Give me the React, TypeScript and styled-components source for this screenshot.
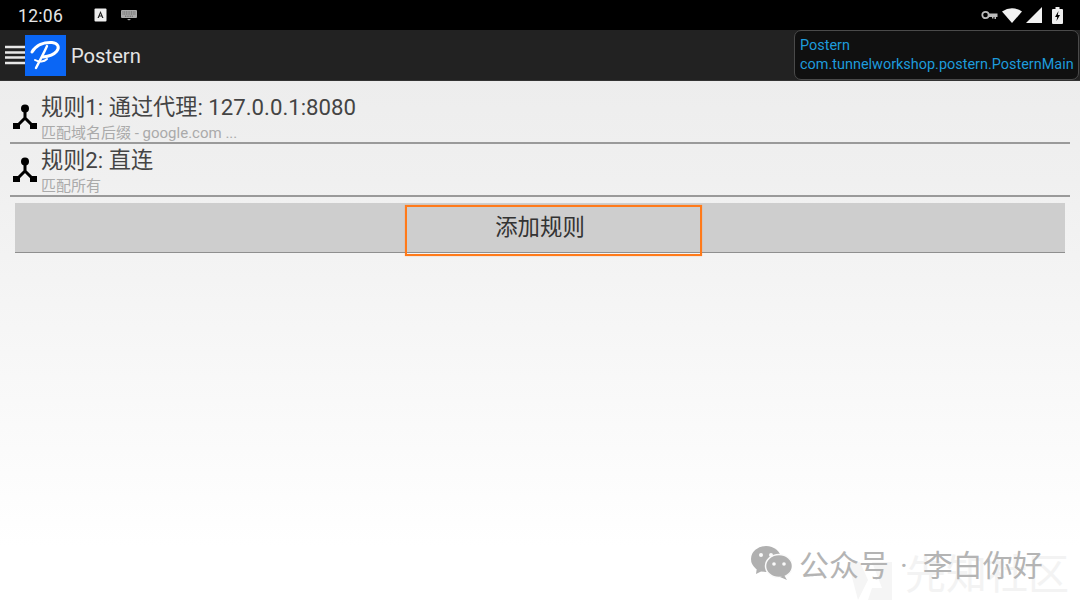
import React from 'react';
import styled, { createGlobalStyle } from 'styled-components';

const Global = createGlobalStyle`
  html, body { margin: 0; padding: 0; }
  body { font-family: Roboto, "Noto Sans CJK SC", sans-serif; overflow: hidden; }
  * { box-sizing: border-box; }
`;
const CJK = `Roboto, "Noto Sans CJK SC", sans-serif`;

const Screen = styled.div`
  position: relative; width: 1080px; height: 607px; overflow: hidden;
  display: flex; flex-direction: column;
  background: linear-gradient(#ebebeb 0%, #f0f0f0 30%, #ffffff 90%);
`;
const StatusBar = styled.div`
  height: 30px; background: #000; display: flex; align-items: center;
  padding: 0 17px 0 18px; color: #eee; flex: none;
`;
const Clock = styled.span`font-size: 17.5px; letter-spacing: 0.3px; width: 62px; color: #e6e6e6; margin-top: 2px;`;
const StatusLeft = styled.div`display: flex; align-items: center; gap: 14px; flex: 1;`;
const StatusRight = styled.div`display: flex; align-items: center; gap: 4px;`;

const AppBar = styled.div`
  height: 51px; flex: none; background: #222; border-bottom: 1px solid #333;
  display: flex; align-items: center; padding-left: 5px;
`;
const Logo = styled.div`
  width: 41px; height: 41px; background: #0a66f5; display: flex; align-items: center; justify-content: center; flex: none;
`;
const Title = styled.div`font-size: 20.2px; color: #e4e4e4; margin: 2px 0 0 5px; flex: 1;`;
const Toast = styled.div`
  width: 285px; height: 50px; margin-right: 1px; border: 1px solid #4a4a4a; border-radius: 7px; background: #101010;
  color: #1e9bdc; font-size: 14.45px; line-height: 19px; padding: 5px 0 0 5px; white-space: nowrap;
`;
const List = styled.div`display: flex; flex-direction: column; padding: 10px 10px 0;`;
const Row = styled.div`
  height: 53px; border-bottom: 2px solid #9a9a9a; display: flex; align-items: flex-start; gap: 3px; padding-left: 2px;
`;
const RowIcon = styled.svg`width: 26px; height: 28px; margin-top: 12px; flex: none;`;
const RowText = styled.div`display: flex; flex-direction: column; font-family: ${CJK};`;
const RowTitle = styled.div`font-size: 22.2px; line-height: 30px; color: #444; white-space: nowrap; margin-top: 1px;`;
const RowSub = styled.div`font-size: 15px; line-height: 17px; color: #aaa; white-space: nowrap; margin-top: 3px;`;

const AddWrap = styled.div`padding: 6px 15px 0;`;
const AddButton = styled.div`
  position: relative; height: 50px; background: #cecece; border-bottom: 1px solid #8f8f8f;
  display: flex; align-items: center; justify-content: center; font-size: 22.4px; color: #333; font-family: ${CJK};
  padding-bottom: 5px;
`;
const Focus = styled.div`
  position: absolute; left: 390px; top: 2px; width: 297px; height: 51px; border: 2px solid #ff7a1a;
  box-shadow: 0 0 1px rgba(255, 122, 26, 0.6);
`;
const Watermark = styled.div`
  position: absolute; left: 751px; top: 541px; display: flex; align-items: center; gap: 7px;
  color: #b4b4b4; font-size: 30px; font-family: ${CJK}; white-space: nowrap;
`;
const Sep = styled.span`margin: 0 15px 0 11px;`;
const Faint = styled.div`
  position: absolute; left: 905px; top: 550px; font-size: 41px; color: #f3f3f3; font-family: ${CJK}; white-space: nowrap; line-height: 50px;
`;
const FaintMark = styled.svg`
  position: absolute; left: 848px; top: 558px; width: 44px; height: 42px;
`;

const RuleIcon = () => (
  <RowIcon viewBox="0 0 26 28">
    <circle cx="13" cy="5.500" r="4" fill="#000" />
    <path d="M13 8v8M13 15L6 22M13 15l7 7" stroke="#000" strokeWidth="3" fill="none" />
    <rect x="1" y="20" width="7" height="6" fill="#000" />
    <rect x="18" y="20" width="7" height="6" fill="#000" />
  </RowIcon>
);

export default function App() {
  return (
    <Screen>
      <Global />
      <StatusBar>
        <StatusLeft>
          <Clock>12:06</Clock>
          <svg width="13" height="14" viewBox="0 0 13 14">
            <rect x="0.5" y="0.5" width="12" height="13" rx="1" fill="#eee" />
            <path d="M6.5 3L3.5 10h1.4l.5-1.4h2.2l.5 1.4h1.4L6.5 3zM5.8 7.4l.7-2 .7 2z" fill="#222" />
          </svg>
          <svg width="16" height="12" viewBox="0 0 16 12">
            <rect x="0" y="1" width="16" height="8" rx="1" fill="#aaa" />
            <path d="M1.5 3h13M1.5 5h13M4 7.2h8" stroke="#444" strokeWidth="0.7" strokeDasharray="1 .7" />
            <path d="M6 10h4l-2 1.5z" fill="#aaa" />
          </svg>
        </StatusLeft>
        <StatusRight>
          <svg width="17" height="10" viewBox="0 0 17 10">
            <circle cx="4.5" cy="5" r="3.2" fill="none" stroke="#bbb" strokeWidth="1.800" />
            <path d="M7.500 3.500h9v3.500h-1.500v2h-1.500V7h-1v1.500h-1.500V7h-3.500z" fill="#bbb" />
          </svg>
          <svg width="20" height="15" viewBox="0 0 20 15"><path d="M0 3.500Q10 -3 20 3.500L10 15z" fill="#f2f2f2" /></svg>
          <svg width="16" height="16" viewBox="0 0 16 16"><path d="M16 0v16H0z" fill="#f2f2f2" /></svg>
          <svg width="11" height="17" viewBox="0 0 11 17" style={{ marginLeft: 6 }}>
            <path d="M3.500 0h4v2H10a1 1 0 0 1 1 1v13a1 1 0 0 1-1 1H1a1 1 0 0 1-1-1V3a1 1 0 0 1 1-1h2.500z" fill="#eee" />
            <path d="M6.500 4L3 10h2.200l-.7 4L8 8H5.800z" fill="#000" />
          </svg>
        </StatusRight>
      </StatusBar>
      <AppBar>
        <svg width="20" height="20" viewBox="0 0 20 20">
          <path d="M0 2h20M0 7.500h20M0 12.500h20M0 18h20" stroke="#e8e8e8" strokeWidth="2.500" />
        </svg>
        <Logo>
          <svg width="34" height="32" viewBox="0 0 34 32">
            <path d="M3 13C7 6 15 3 23 3.500c6 .5 8 5 4.500 9-3 3.500-9 5-13.500 5.500" fill="none" stroke="#fff" strokeWidth="3" strokeLinecap="round" />
            <path d="M18 7C15 14 11 21 7 29" fill="none" stroke="#fff" strokeWidth="2.400" strokeLinecap="round" />
            <path d="M6 21c4 2.500 9 2 12-1" fill="none" stroke="#fff" strokeWidth="2" strokeLinecap="round" />
          </svg>
        </Logo>
        <Title>Postern</Title>
        <Toast>
          Postern<br />com.tunnelworkshop.postern.PosternMain
        </Toast>
      </AppBar>
      <List>
        <Row>
          <RuleIcon />
          <RowText>
            <RowTitle>规则1: 通过代理: 127.0.0.1:8080</RowTitle>
            <RowSub>匹配域名后缀 - google.com ...</RowSub>
          </RowText>
        </Row>
        <Row>
          <RuleIcon />
          <RowText>
            <RowTitle>规则2: 直连</RowTitle>
            <RowSub>匹配所有</RowSub>
          </RowText>
        </Row>
      </List>
      <AddWrap>
        <AddButton>
          添加规则
          <Focus />
        </AddButton>
      </AddWrap>
      <FaintMark viewBox="0 0 44 42">
        <path d="M0 4h12l8 18-10 20zM24 4h20v38H20l4-12h10z" fill="#f5f5f5" />
      </FaintMark>
      <Faint>先知社区</Faint>
      <Watermark>
        <svg width="41" height="34" viewBox="0 0 41 34">
          <ellipse cx="15" cy="13" rx="15" ry="13" fill="#b0b0b0" />
          <path d="M6 21l-1 7 8-4z" fill="#b0b0b0" />
          <ellipse cx="28" cy="20" rx="13.500" ry="11.500" fill="#b0b0b0" stroke="#fafafa" strokeWidth="1.500" />
          <path d="M33 29l3 5-7-3z" fill="#b0b0b0" />
          <circle cx="10" cy="9" r="2" fill="#fafafa" />
          <circle cx="20" cy="9" r="2" fill="#fafafa" />
          <circle cx="23" cy="18" r="1.800" fill="#fafafa" />
          <circle cx="33" cy="18" r="1.800" fill="#fafafa" />
        </svg>
        <span>公众号<Sep>·</Sep>李白你好</span>
      </Watermark>
    </Screen>
  );
}
